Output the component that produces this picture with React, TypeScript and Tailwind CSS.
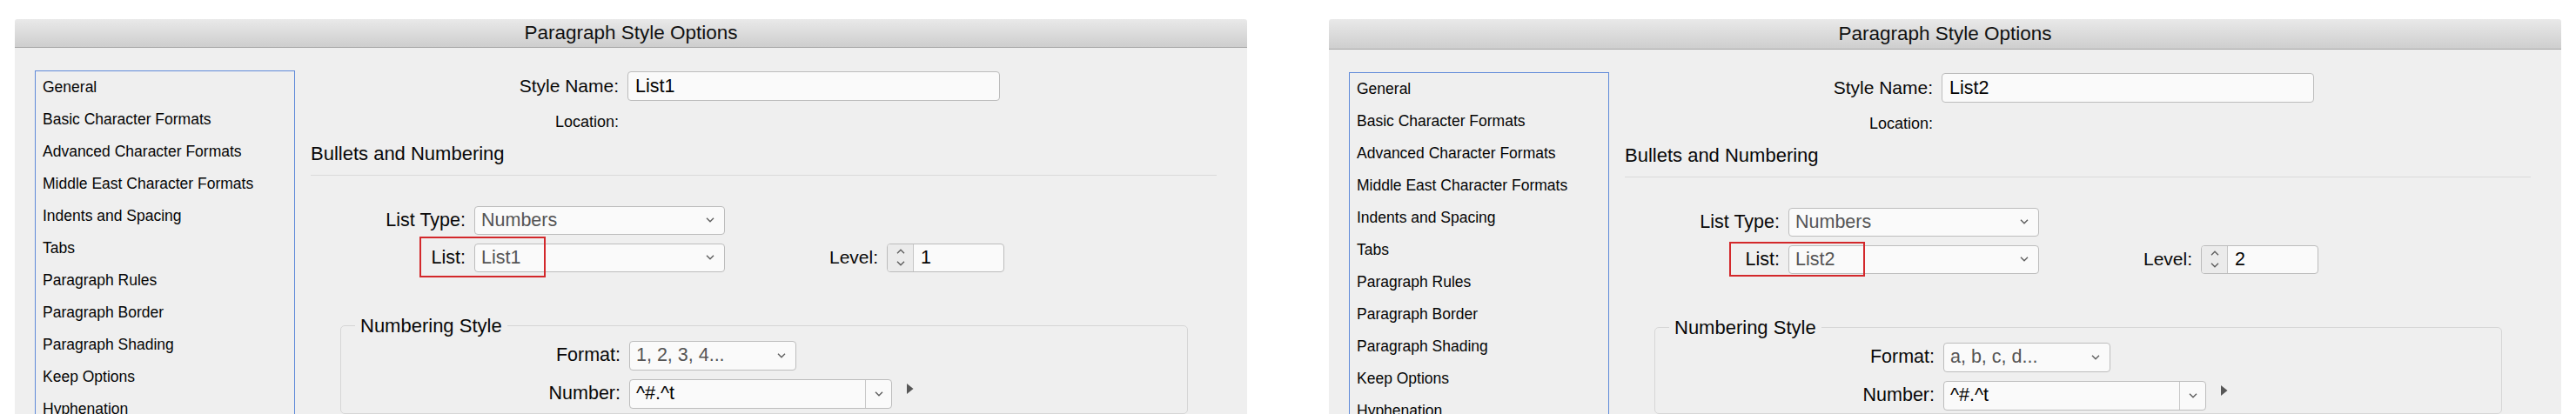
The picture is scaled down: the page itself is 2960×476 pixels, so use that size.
import React from "react";

const SIDEBAR = [
  "General",
  "Basic Character Formats",
  "Advanced Character Formats",
  "Middle East Character Formats",
  "Indents and Spacing",
  "Tabs",
  "Paragraph Rules",
  "Paragraph Border",
  "Paragraph Shading",
  "Keep Options",
  "Hyphenation",
];

function Chevron({ up = false }: { up?: boolean }) {
  return (
    <svg width="10" height="6" viewBox="0 0 10 6" className="shrink-0">
      <path
        d={up ? "M1 5.2L5 1.2l4 4" : "M1 0.8l4 4 4-4"}
        fill="none"
        stroke="#5e5e5e"
        strokeWidth="1.4"
      />
    </svg>
  );
}

function Select({ value, className }: { value: string; className: string }) {
  return (
    <div
      className={`flex items-center justify-between rounded-[4px] border border-[#bdbdbd] bg-[#fafafa] pl-[7px] pr-[11px] text-[21.5px] text-[#555] ${className}`}
    >
      <span>{value}</span>
      <Chevron />
    </div>
  );
}

type DialogProps = {
  name: string;
  list: string;
  level: string;
  format: string;
  tall: boolean;
  right: boolean;
};

function Dialog({ name, list, level, format, tall, right }: DialogProps) {
  return (
    <div className="flex w-[1416px] shrink-0 flex-col">
      <div
        className={`flex ${tall ? "h-[35px]" : "h-[33px]"} items-center justify-center rounded-t-[3px] border-b border-[#a7a7a7] bg-linear-to-b from-[#e9e9e9] to-[#cecece] text-[22.5px] text-[#111]`}
      >
        Paragraph Style Options
      </div>
      <div className="flex flex-1 overflow-hidden bg-[#efefef] pl-[23px] pt-[26px]">
        {/* sidebar list */}
        <div className="h-[420px] w-[299px] shrink-0 border border-[#5f8ad9] pl-[8px]">
          {SIDEBAR.map((t) => (
            <div key={t} className="flex h-[37px] items-center text-[17.5px] text-[#050505]">
              {t}
            </div>
          ))}
        </div>

        {/* main panel */}
        <div className="flex flex-col pt-[1px] text-[#080808]">
          <div className="flex h-[34px] items-center">
            <span className="w-[372px] text-right text-[21px]">Style Name:</span>
            <div className="ml-[10px] flex h-[34px] w-[428px] items-center rounded-[4px] border border-[#bcbcbc] bg-[#fafafa] pl-[8px] text-[21.5px] text-[#050505]">
              {name}
            </div>
          </div>

          <div className="mt-[12px] flex h-[24px] items-center">
            <span className="w-[372px] text-right text-[18px]">Location:</span>
          </div>

          <div className="ml-[18px] mt-[10px] flex h-[28px] items-center text-[22px]">
            Bullets and Numbering
          </div>
          <div className="ml-[18px] mt-[11px] h-px w-[1041px] bg-[#dadada]" />

          <div className="mt-[35px] flex h-[33px] items-center">
            <span className="w-[196px] text-right text-[21.5px]">List Type:</span>
            <Select value="Numbers" className="ml-[10px] h-[33px] w-[288px]" />
          </div>

          <div className="mt-[10px] flex h-[33px] items-center">
            <span className="w-[196px] text-right text-[21.5px]">List:</span>
            <div className="relative ml-[10px]">
              <Select value={list} className="h-[33px] w-[288px]" />
              <div
                className={`absolute border-2 border-[#d3282b] ${
                  right
                    ? "left-[-68px] top-[-4px] h-[40px] w-[156px]"
                    : "left-[-63px] top-[-8px] h-[47px] w-[145px]"
                }`}
              />
            </div>
            <span className="ml-[120px] text-[21px]">Level:</span>
            <div className="ml-[10px] flex h-[33px] w-[135px] overflow-hidden rounded-[4px] border border-[#bcbcbc] bg-[#fafafa]">
              <div className="flex w-[30px] flex-col items-center justify-center gap-[8px] border-r border-[#c6c6c6] bg-[#ebebeb]">
                <Chevron up />
                <Chevron />
              </div>
              <div className="flex items-center pl-[8px] text-[21.5px] text-[#050505]">{level}</div>
            </div>
          </div>

          <fieldset className="ml-[52px] mt-[49px] h-[200px] w-[974px] rounded-[5px] border border-[#d6d6d6] pl-[16px]">
            <legend className="px-[6px] text-[22px] leading-[26px]">Numbering Style</legend>
            <div className="mt-[4px] flex h-[34px] items-center">
              <span className="w-[305px] text-right text-[21.5px]">Format:</span>
              <Select value={format} className="ml-[10px] h-[34px] w-[192px]" />
            </div>
            <div className="mt-[10px] flex h-[34px] items-start">
              <span className="flex h-[34px] w-[305px] items-center justify-end text-[21.5px]">Number:</span>
              <div className="ml-[10px] flex h-[34px] w-[302px] overflow-hidden rounded-[4px] border border-[#bdbdbd] bg-[#fafafa]">
                <div className="flex flex-1 items-center pl-[7px] text-[21.5px] text-[#050505]">^#.^t</div>
                <div className="flex w-[30px] items-center justify-center border-l border-[#c8c8c8]">
                  <Chevron />
                </div>
              </div>
              <svg width="8" height="12" viewBox="0 0 8 12" className="ml-[17px] mt-[5px]">
                <path d="M0 0L7.5 6L0 12Z" fill="#575757" />
              </svg>
            </div>
          </fieldset>
        </div>
      </div>
    </div>
  );
}

export default function App() {
  return (
    <div className="flex h-[476px] w-[2960px] gap-[94px] overflow-hidden bg-white pl-[17px] pt-[22px] font-['Liberation_Sans',Arial,sans-serif]">
      <Dialog name="List1" list="List1" level="1" format="1, 2, 3, 4..." tall={false} right={false} />
      <Dialog name="List2" list="List2" level="2" format="a, b, c, d..." tall={true} right={true} />
    </div>
  );
}
